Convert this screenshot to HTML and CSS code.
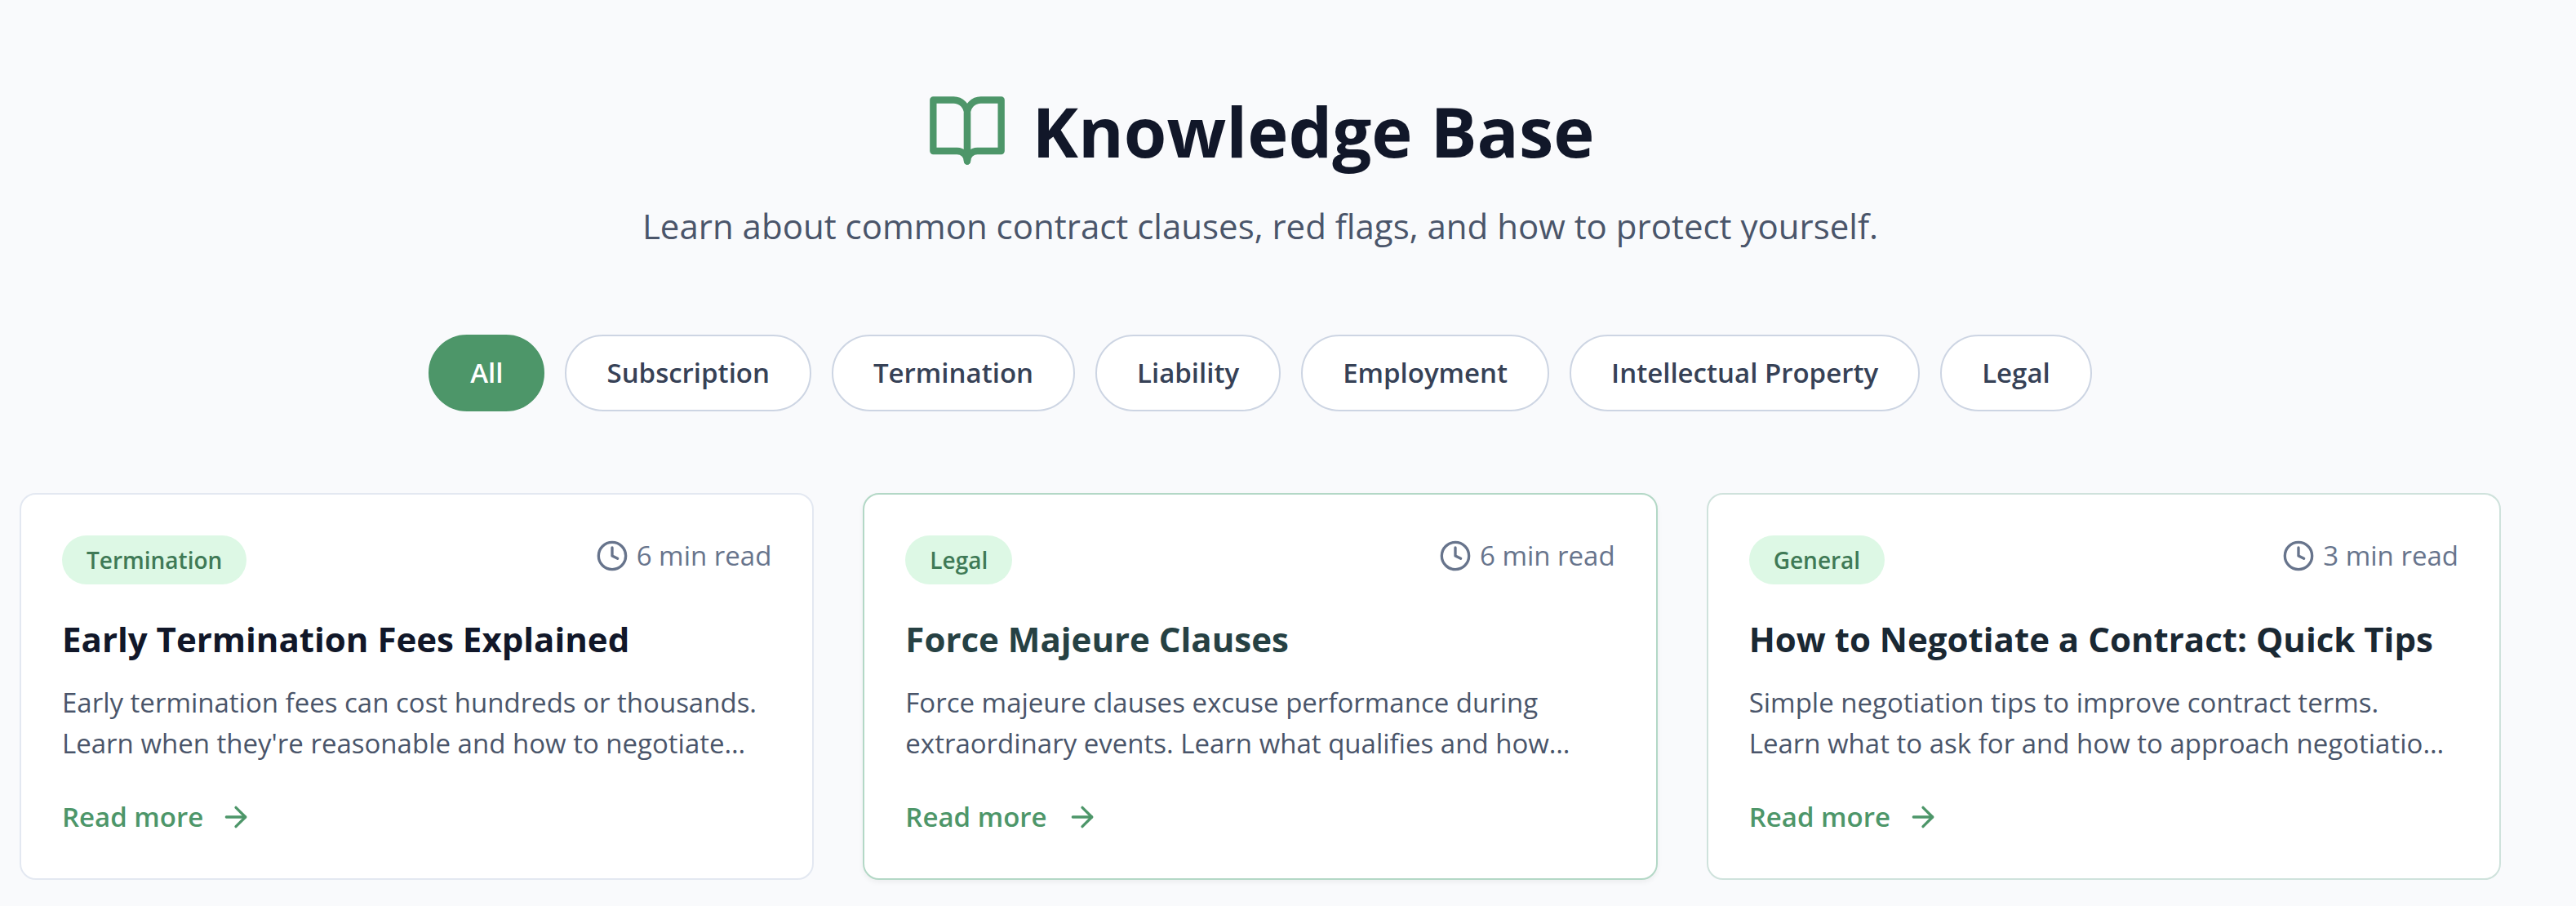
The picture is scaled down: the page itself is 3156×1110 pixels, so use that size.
FILE: index.html
```
<!DOCTYPE html>
<html lang="en">
<head>
    <meta charset="UTF-8">
    <meta name="viewport" content="width=device-width, initial-scale=1.0">
    <title>Knowledge Base</title>
    <link rel="stylesheet" href="styles.css">
</head>
<body>
    <!-- Shared icons -->
    <svg class="sprite" aria-hidden="true">
        <symbol id="icon-clock" viewBox="0 0 24 24">
            <circle cx="12" cy="12" r="10"/>
            <path d="M12 6v6l4 2"/>
        </symbol>
        <symbol id="icon-arrow" viewBox="0 0 24 24">
            <path d="M5 12h14"/>
            <path d="m12 5 7 7-7 7"/>
        </symbol>
    </svg>

    <main class="page">
        <header class="intro">
            <h1>
                <svg class="icon icon-book" viewBox="0 0 24 24" aria-hidden="true">
                    <path d="M2 3h6a4 4 0 0 1 4 4v14a3 3 0 0 0-3-3H2z"/>
                    <path d="M22 3h-6a4 4 0 0 0-4 4v14a3 3 0 0 1 3-3h7z"/>
                </svg>
                Knowledge Base
            </h1>
            <p>Learn about common contract clauses, red flags, and how to protect yourself.</p>
        </header>

        <nav class="filters" aria-label="Categories">
            <button type="button" class="filter active">All</button>
            <button type="button" class="filter">Subscription</button>
            <button type="button" class="filter">Termination</button>
            <button type="button" class="filter">Liability</button>
            <button type="button" class="filter">Employment</button>
            <button type="button" class="filter">Intellectual Property</button>
            <button type="button" class="filter">Legal</button>
        </nav>

        <section class="articles">
            <article class="card">
                <div class="card-top">
                    <span class="badge">Termination</span>
                    <span class="time"><svg class="icon" aria-hidden="true"><use href="#icon-clock"/></svg>6 min read</span>
                </div>
                <h2>Early Termination Fees Explained</h2>
                <p>Early termination fees can cost hundreds or thousands. Learn when they're reasonable and how to negotiate…</p>
                <a class="more" href="#">Read more <svg class="icon" aria-hidden="true"><use href="#icon-arrow"/></svg></a>
            </article>

            <article class="card card-active">
                <div class="card-top">
                    <span class="badge">Legal</span>
                    <span class="time"><svg class="icon" aria-hidden="true"><use href="#icon-clock"/></svg>6 min read</span>
                </div>
                <h2>Force Majeure Clauses</h2>
                <p>Force majeure clauses excuse performance during extraordinary events. Learn what qualifies and how…</p>
                <a class="more" href="#">Read more <svg class="icon" aria-hidden="true"><use href="#icon-arrow"/></svg></a>
            </article>

            <article class="card card-fading">
                <div class="card-top">
                    <span class="badge">General</span>
                    <span class="time"><svg class="icon" aria-hidden="true"><use href="#icon-clock"/></svg>3 min read</span>
                </div>
                <h2>How to Negotiate a Contract: Quick Tips</h2>
                <p>Simple negotiation tips to improve contract terms. <br>Learn what to ask for and how to approach negotiatio…</p>
                <a class="more" href="#">Read more <svg class="icon" aria-hidden="true"><use href="#icon-arrow"/></svg></a>
            </article>
        </section>
    </main>
</body>
</html>
```
FILE: styles.css
```
* {
    box-sizing: border-box;
}

body {
    margin: 0;
    background-color: #f9fafc;
    color: #111729;
    font-family: "Segoe UI", "Open Sans", "Noto Sans", sans-serif;
}

h1, h2, p {
    margin: 0;
}

.sprite {
    display: none;
}

.icon {
    width: 40px;
    height: 40px;
    flex-shrink: 0;
    fill: none;
    stroke: currentColor;
    stroke-width: 2;
    stroke-linecap: round;
    stroke-linejoin: round;
}

.page {
    padding: 110px 92px 30px 24px;
}

/* Title */
.intro {
    text-align: center;
    margin-bottom: 98px;
}

.intro h1 {
    display: flex;
    align-items: center;
    justify-content: center;
    gap: 30px;
    margin-bottom: 32px;
    font-size: 85px;
    line-height: 100px;
    font-weight: 700;
}

.icon-book {
    width: 100px;
    height: 100px;
    color: #4d9669;
}

.intro p {
    color: #4a556a;
    font-size: 42px;
    line-height: 70px;
}

/* Category filters */
.filters {
    display: flex;
    flex-wrap: wrap;
    justify-content: center;
    gap: 25px;
    margin-bottom: 100px;
}

.filter {
    padding: 20px 49px;
    border: 2px solid #cdd5e3;
    border-radius: 50px;
    background-color: white;
    color: #364156;
    font-family: inherit;
    font-size: 33px;
    line-height: 50px;
    font-weight: 600;
    cursor: pointer;
}

.filter.active {
    border-color: #4d9669;
    background-color: #4d9669;
    color: white;
}

/* Article cards */
.articles {
    display: grid;
    grid-template-columns: repeat(3, 1fr);
    gap: 60px;
}

.card {
    padding: 50px;
    border: 2px solid #e3e8f1;
    border-radius: 20px;
    background-color: white;
}

.card-active {
    border-color: #b3d8c6;
    box-shadow: 0 3px 6px rgba(0, 0, 0, 0.05);
}

.card-fading {
    border-color: #cfe2dc;
}

.card-top {
    display: flex;
    align-items: flex-start;
    justify-content: space-between;
    margin-bottom: 32px;
}

.badge {
    padding: 10px 30px;
    border-radius: 30px;
    background-color: #ddf8e5;
    color: #3f7a56;
    font-size: 28px;
    line-height: 40px;
    font-weight: 600;
}

.time {
    display: flex;
    align-items: center;
    gap: 10px;
    color: #67748c;
    font-size: 33px;
    line-height: 50px;
}

.card h2 {
    margin-bottom: 18px;
    font-size: 42px;
    line-height: 70px;
    font-weight: 700;
}

.card-active h2 {
    color: #264143;
}

.card-fading h2 {
    color: #1a2833;
}

.card p {
    margin-bottom: 40px;
    color: #4a556a;
    font-size: 33px;
    line-height: 50px;
}

.more {
    display: flex;
    align-items: center;
    gap: 20px;
    color: #4d9669;
    font-size: 33px;
    line-height: 50px;
    font-weight: 600;
    text-decoration: none;
}

.card-active .more {
    gap: 23px;
}
```
